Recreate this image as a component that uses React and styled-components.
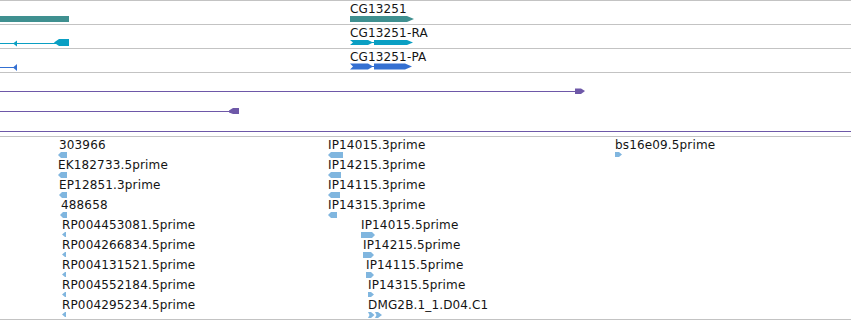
import React from 'react';
import styled, { createGlobalStyle } from 'styled-components';

const Global = createGlobalStyle`
  html, body { margin: 0; padding: 0; background: #ffffff; }
  body { font-family: "DejaVu Sans", Verdana, sans-serif; }
`;

const Browser = styled.div`
  width: 851px;
  display: flex;
  flex-direction: column;
  border-top: 1px solid #c3c3c3;
  background: #fff;
`;

const Track = styled.div`
  position: relative;
  height: ${(p) => p.$h}px;
  border-bottom: 1px solid #c3c3c3;
  overflow: hidden;
`;

const Glyphs = styled.svg`
  position: absolute;
  left: 0;
  top: 0;
  width: 851px;
  height: 100%;
  display: block;
`;

const Label = styled.div`
  position: absolute;
  left: ${(p) => p.$x}px;
  top: ${(p) => p.$y || 1}px;
  font-size: 12px;
  line-height: 14px;
  letter-spacing: 0.15px;
  color: #141414;
  white-space: nowrap;
`;

const Feature = styled.div`
  position: absolute;
  left: ${(p) => p.$x}px;
  top: ${(p) => p.$row * 20}px;
  display: flex;
  flex-direction: column;
  align-items: flex-start;
`;

const FeatureName = styled.span`
  font-size: 12px;
  line-height: 14px;
  letter-spacing: 0.15px;
  padding-top: 1px;
  color: #141414;
  white-space: nowrap;
  margin-left: ${(p) => p.$dx || 0}px;
`;

const ArrowSvg = styled.svg`
  display: block;
`;

const EST = '#80b6df';

function EstArrow({ w, dir, h = 6 }) {
  const pts =
    dir === 'left'
      ? `0,${h / 2} 3,0 ${w},0 ${w},${h} 3,${h}`
      : `0,0 ${w - 3},0 ${w},${h / 2} ${w - 3},${h} 0,${h}`;
  return (
    <ArrowSvg width={w} height={h}>
      <polygon points={pts} fill={EST} />
    </ArrowSvg>
  );
}

function DoubleArrow() {
  return (
    <ArrowSvg width={15} height={6}>
      <polygon points="0,0 3,0 6.5,3 3,6 0,6 1.5,3" fill={EST} />
      <polygon points="7,0 10,0 14,3 10,6 7,6 8.5,3" fill={EST} />
    </ArrowSvg>
  );
}

const ests = [
  { name: '303966', x: 58, row: 0, w: 9, dir: 'left', dx: 1 },
  { name: 'EK182733.5prime', x: 58, row: 1, w: 9, dir: 'left', dx: 0 },
  { name: 'EP12851.3prime', x: 59, row: 2, w: 8, dir: 'left', dx: 0 },
  { name: '488658', x: 60, row: 3, w: 7, dir: 'left', dx: 1 },
  { name: 'RP004453081.5prime', x: 62, row: 4, w: 4, dir: 'left', dx: 0, h: 5 },
  { name: 'RP004266834.5prime', x: 62, row: 5, w: 4, dir: 'left', dx: 0, h: 5 },
  { name: 'RP004131521.5prime', x: 62, row: 6, w: 4, dir: 'left', dx: 0, h: 5 },
  { name: 'RP004552184.5prime', x: 62, row: 7, w: 4, dir: 'left', dx: 0, h: 5 },
  { name: 'RP004295234.5prime', x: 62, row: 8, w: 4, dir: 'left', dx: 0, h: 5 },
  { name: 'IP14015.3prime', x: 328, row: 0, w: 15, dir: 'left' },
  { name: 'IP14215.3prime', x: 328, row: 1, w: 13, dir: 'left' },
  { name: 'IP14115.3prime', x: 328, row: 2, w: 12, dir: 'left' },
  { name: 'IP14315.3prime', x: 328, row: 3, w: 9, dir: 'left' },
  { name: 'IP14015.5prime', x: 361, row: 4, w: 14, dir: 'right' },
  { name: 'IP14215.5prime', x: 363, row: 5, w: 11, dir: 'right' },
  { name: 'IP14115.5prime', x: 366, row: 6, w: 8, dir: 'right' },
  { name: 'IP14315.5prime', x: 368, row: 7, w: 6, dir: 'right', h: 5 },
  { name: 'DMG2B.1_1.D04.C1', x: 368, row: 8, double: true },
  { name: 'bs16e09.5prime', x: 615, row: 0, w: 7, dir: 'right', h: 5 },
];

const TEAL = '#3f9090';
const CYAN = '#0a9fc3';
const BLUE = '#3470d2';
const PURPLE = '#6e58a8';

export default function App() {
  return (
    <>
      <Global />
      <Browser>
        <Track $h={23}>
          <Glyphs>
            <rect x="0" y="15" width="69" height="6" fill={TEAL} />
            <polygon points="350,15 407,15 414,18 407,21 350,21" fill={TEAL} />
          </Glyphs>
          <Label $x={350}>CG13251</Label>
        </Track>

        <Track $h={23}>
          <Glyphs>
            <line x1="0" y1="18.5" x2="56" y2="18.5" stroke={CYAN} strokeWidth="1" />
            <polygon points="13,18.5 17,15.5 17,21.5" fill={CYAN} />
            <polygon points="54,17.5 59,14 69,14 69,21 59,21" fill={CYAN} />
            <polygon points="350,15 368,15 373,17.5 368,20 350,20 353,17.5" fill={CYAN} />
            <line x1="372" y1="17.5" x2="375" y2="17.5" stroke={CYAN} />
            <polygon points="374,15 407,15 413,17.5 407,20 374,20" fill={CYAN} />
          </Glyphs>
          <Label $x={350}>CG13251-RA</Label>
        </Track>

        <Track $h={23}>
          <Glyphs>
            <line x1="0" y1="18.5" x2="15" y2="18.5" stroke={BLUE} strokeWidth="1" />
            <polygon points="13,18.5 17,15 17,22" fill={BLUE} />
            <polygon points="350,14.5 368,14.5 373,17.5 368,20.5 350,20.5 353,17.5" fill={BLUE} />
            <line x1="372" y1="17.5" x2="375" y2="17.5" stroke={BLUE} />
            <polygon points="374,14.5 405,14.5 412,17.5 405,20.5 374,20.5" fill={BLUE} />
          </Glyphs>
          <Label $x={350}>CG13251-PA</Label>
        </Track>

        <Track $h={63}>
          <Glyphs>
            <line x1="0" y1="18.5" x2="577" y2="18.5" stroke={PURPLE} strokeWidth="1" />
            <polygon points="575,15.5 581,15.5 585,18 581,21 575,21" fill={PURPLE} />
            <line x1="0" y1="38.5" x2="231" y2="38.5" stroke={PURPLE} strokeWidth="1" />
            <polygon points="229,37.5 233,35 239,35 239,41 233,41 229,39.5" fill={PURPLE} />
            <line x1="0" y1="58.5" x2="851" y2="58.5" stroke={PURPLE} strokeWidth="1" />
          </Glyphs>
        </Track>

        <Track $h={182}>
          {ests.map((f) => (
            <Feature key={f.name} $x={f.x} $row={f.row}>
              <FeatureName $dx={f.dx}>{f.name}</FeatureName>
              {f.double ? <DoubleArrow /> : <EstArrow w={f.w} dir={f.dir} h={f.h} />}
            </Feature>
          ))}
        </Track>
      </Browser>
    </>
  );
}
